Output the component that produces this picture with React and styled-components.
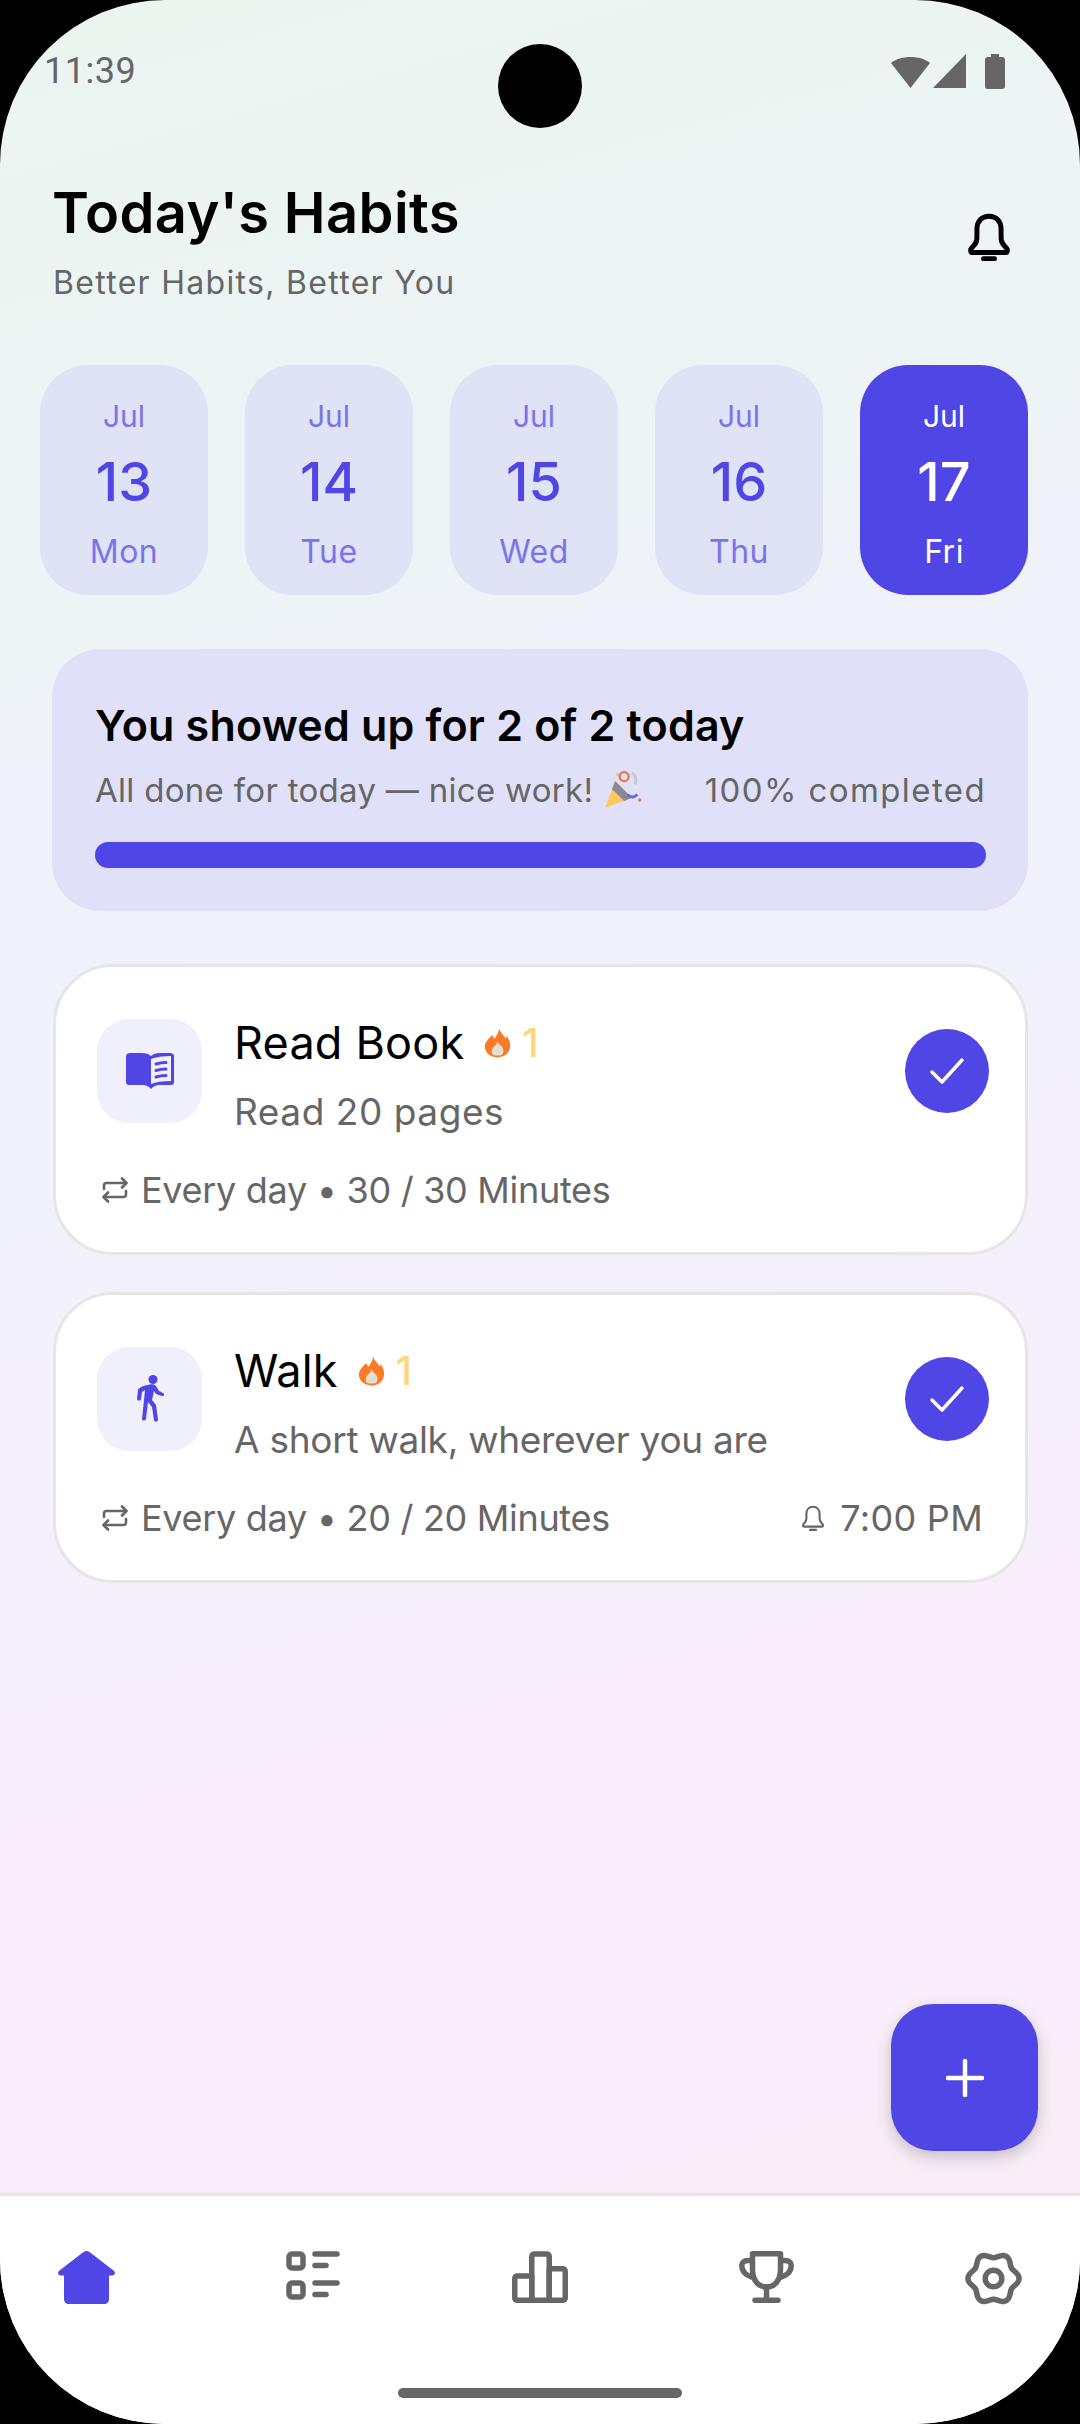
import styled, { createGlobalStyle } from 'styled-components';

const GlobalStyle = createGlobalStyle`
    html, body {
        margin: 0;
        padding: 0;
        background: #000;
    }
    * {
        box-sizing: border-box;
    }
`

const Screen = styled.div`
    position: relative;
    width: 1080px;
    height: 2424px;
    overflow: hidden;
    border-radius: 165px;
    display: flex;
    flex-direction: column;
    font-family: "Inter", "Noto Sans", sans-serif;
    background: linear-gradient(165deg, #ebf5ef 0%, #f0f2fb 38%, #f8eefa 72%, #f9edf6 100%);
`

const StatusBar = styled.div`
    height: 170px;
    padding: 49px 75px 0 44px;
    display: flex;
    justify-content: space-between;
    align-items: flex-start;
    flex-shrink: 0;

    .time {
        font-family: "Roboto", sans-serif;
        font-size: 36px;
        line-height: 44px;
        color: #666;
        letter-spacing: 0.5px;
    }

    svg {
        margin-top: 5px;
    }
`

const Camera = styled.div`
    position: absolute;
    left: 498px;
    top: 44px;
    width: 84px;
    height: 84px;
    border-radius: 50%;
    background: #000;
`

const Header = styled.div`
    padding: 7px 52px 0 52px;
    display: flex;
    justify-content: space-between;
    align-items: flex-start;
    height: 195px;
    flex-shrink: 0;

    .title {
        margin: 0;
        font-size: 56px;
        line-height: 72px;
        font-weight: 600;
        letter-spacing: 0.4px;
        color: #000;
    }

    .subtitle {
        margin: 14px 0 0 1px;
        font-size: 32px;
        line-height: 40px;
        letter-spacing: 1.3px;
        color: #666;
    }

    .bell {
        margin-top: 36px;
        margin-right: 17px;
    }
`

const DateRow = styled.div`
    display: flex;
    gap: 37px;
    padding: 0 52px 0 40px;
    flex-shrink: 0;
`

const DateChip = styled.div`
    width: 168px;
    height: 230px;
    border-radius: 48px;
    display: flex;
    flex-direction: column;
    align-items: center;
    padding-top: 31px;
    background: ${(p) => (p.$active ? '#4f46e5' : '#e0e2f6')};
    color: ${(p) => (p.$active ? '#fff' : '#7a74ea')};

    .month {
        font-size: 30px;
        line-height: 40px;
    }

    .day {
        font-size: 32px;
        line-height: 40px;
        letter-spacing: 0.5px;
    }

    .num {
        font-size: 54px;
        line-height: 70px;
        margin: 11px 0 15px 0;
        font-weight: 500;
        color: ${(p) => (p.$active ? '#fff' : '#4f46e5')};
    }
`

const Progress = styled.div`
    margin: 54px 52px 0 52px;
    height: 262px;
    border-radius: 48px;
    background: #e0e0f9;
    padding: 50px 42px 0 43px;
    flex-shrink: 0;

    .title {
        margin: 0;
        font-size: 43px;
        line-height: 52px;
        font-weight: 600;
        letter-spacing: 0.2px;
        color: #000;
    }

    .row {
        margin-top: 17px;
        display: flex;
        justify-content: space-between;
        align-items: center;
        font-size: 33px;
        line-height: 44px;
        color: #666;
    }

    .note {
        display: flex;
        align-items: center;
        gap: 10px;
        letter-spacing: 0.3px;
    }

    .percent {
        letter-spacing: 1.4px;
    }

    .bar {
        margin-top: 30px;
        height: 26px;
        border-radius: 13px;
        background: #4f46e5;
    }
`

const Card = styled.div`
    margin: ${(p) => p.$gap}px 52px 0 53px;
    height: 291px;
    background: #fff;
    border: 3px solid #e6e6e9;
    border-radius: 60px;
    padding: 52px 36px 0 41px;
    flex-shrink: 0;
`

const CardTop = styled.div`
    display: flex;
    align-items: flex-start;
`

const IconTile = styled.div`
    width: 105px;
    height: 104px;
    border-radius: 32px;
    background: #f0effc;
    display: flex;
    align-items: center;
    justify-content: center;
    flex-shrink: 0;
`

const CardText = styled.div`
    flex: 1;
    margin-left: 32px;

    .name {
        display: flex;
        align-items: center;
        margin: -5px 0 0 0;
        font-size: 45px;
        line-height: 58px;
        letter-spacing: 0.2px;
        color: #000;
    }

    .streak {
        margin-left: 20px;
        display: flex;
        align-items: center;
        gap: 11px;
        font-size: 39px;
        font-weight: 500;
        color: #fdd57e;
    }
`

const Desc = styled.p`
    margin: 17px 0 0 0;
    font-size: 37px;
    line-height: 46px;
    letter-spacing: ${(p) => p.$spacing}px;
    color: #666;
`

const CheckCircle = styled.div`
    width: 84px;
    height: 84px;
    border-radius: 50%;
    background: #4f46e5;
    display: flex;
    align-items: center;
    justify-content: center;
    margin-top: 10px;
    flex-shrink: 0;
`

const CardMeta = styled.div`
    margin: 32px 6px 0 5px;
    display: flex;
    justify-content: space-between;
    align-items: center;
    font-size: 36px;
    line-height: 46px;
    color: #666;
`

const MetaPart = styled.span`
    display: flex;
    align-items: center;
    gap: ${(p) => p.$gap}px;
    letter-spacing: ${(p) => p.$spacing}px;
`

const Fab = styled.div`
    position: absolute;
    left: 891px;
    top: 2004px;
    width: 147px;
    height: 147px;
    border-radius: 42px;
    background: #4f46e5;
    display: flex;
    align-items: center;
    justify-content: center;
    box-shadow: 0 6px 16px rgba(0, 0, 0, 0.2);
`

const BottomNav = styled.div`
    margin-top: auto;
    height: 231px;
    background: #fff;
    border-top: 3px solid #e6e6e9;
    padding: 55px 58px 0 58px;
    display: flex;
    justify-content: space-between;
    align-items: flex-start;
    position: relative;
    flex-shrink: 0;

    svg {
        display: block;
    }
`

const HomeBar = styled.div`
    position: absolute;
    left: 398px;
    bottom: 26px;
    width: 284px;
    height: 10px;
    border-radius: 5px;
    background: #666;
`

const Fire = () => (
    <svg width="27" height="32" viewBox="0 0 30 34">
        <path d="M17 1c1 5 4 6 7 11 1-1 1-2 1-3 3 4 4 8 4 11 0 8-6 13-14 13S1 28 1 21c0-6 5-9 8-13 1 2 2 3 3 4 2-3 4-6 5-11z" fill="#fb7a25" />
        <path d="M15 15c1 3 3 4 5 6 2 3 2 6 1 8-1 2-3 2-6 2s-5 0-6-2c-1-3 0-6 2-8 2-1 3-3 4-6z" fill="#e5dfd2" />
    </svg>
)

const Popper = () => (
    <svg width="40" height="40" viewBox="0 0 36 36">
        <path d="M2 34l9-24 15 15z" fill="#fdc95e" />
        <path d="M11 10l15 15-7 3-11-11z" fill="#8a8a94" />
        <circle cx="19" cy="6" r="4" fill="none" stroke="#e8734a" strokeWidth="2" />
        <path d="M26 3c4 2 4 6 3 10" fill="none" stroke="#c9c9cf" strokeWidth="3" />
        <path d="M22 22c3 3 6 3 9 0" fill="none" stroke="#6d66e8" strokeWidth="2.5" />
        <circle cx="33" cy="27" r="1.5" fill="#e8734a" />
        <circle cx="13" cy="4" r="1.5" fill="#fdc95e" />
    </svg>
)

const Repeat = () => (
    <svg width="26" height="28" viewBox="0 0 26 28" fill="none" stroke="#666" strokeWidth="2.6" strokeLinecap="round" strokeLinejoin="round">
        <path d="M2 13V9.5C2 8 3 7 4.5 7H24" />
        <path d="M20 2.5L24.5 7 20 11.5" />
        <path d="M24 15v3.5c0 1.500-1 2.500-2.500 2.500H2" />
        <path d="M6 16.500L1.500 21 6 25.500" />
    </svg>
)

const Bell = ({ size, color, weight }) => (
    <svg width={size} height={size * 1.1} viewBox="0 0 40 44" fill="none" stroke={color} strokeWidth={weight} strokeLinejoin="round">
        <path d="M20 3c-7 0-11 5-11 12v8c0 4-2 6-5 9-1 1-1 4 1 4h30c2 0 2-3 1-4-3-3-5-5-5-9v-8c0-7-4-12-11-12z" />
        <path d="M15 41.500h10" strokeLinecap="round" />
    </svg>
)

const Check = () => (
    <svg width="36" height="30" viewBox="0 0 36 30" fill="none" stroke="#fff" strokeWidth="3.500" strokeLinecap="round" strokeLinejoin="round">
        <path d="M3 16l10 10L33 4" />
    </svg>
)

const BookIcon = () => (
    <svg width="48" height="38" viewBox="0 0 48 38">
        <path d="M4 1h12c4 0 7 1 9 3 2-2 5-3 9-3h10c2 0 4 1 4 3v26c0 2-1 3-3 3H33c-3 0-5 1-8 4-3-3-5-4-8-4H3c-2 0-3-1-3-3V4c0-2 2-3 4-3z" fill="#4f46e5" />
        <path d="M25 7c5-2 12-3 20-3v25c-8 0-15 1-20 3z" fill="#f0effc" />
        <path d="M30 12c3-1 7-1.500 10-1.500M30 18.500c3-1 7-1.500 10-1.500M30 25c3-1 7-1.500 10-1.500" stroke="#4f46e5" strokeWidth="3" strokeLinecap="round" fill="none" />
    </svg>
)

const WalkIcon = () => (
    <svg width="30" height="48" viewBox="0 0 30 48" fill="#4f46e5">
        <circle cx="18" cy="4.500" r="4.500" />
        <path d="M13 10c3-1 6-1 8 1l3 5 4 2c2 1 1 4-1 3l-6-2-2-3-2 9 4 5 2 15c0 2-4 2-4 0l-2-13-4-5-2 17c-1 2-4 2-4 0l2-19 1-10-3 2-1 7c0 2-4 2-4 0l1-9c0-2 7-5 10-5z" />
    </svg>
)

const HomeIcon = () => (
    <svg width="57" height="53" viewBox="0 0 57 53" fill="#4f46e5">
        <path d="M25.500 1c2-1.300 4-1.300 6 0l24 18.500c2.500 2 1.500 5-1.500 5h-3v23.500c0 3-2 5-5 5H11c-3 0-5-2-5-5V24.500H3c-3 0-4-3-1.500-5z" />
    </svg>
)

const ListIcon = () => (
    <svg width="54" height="49" viewBox="0 0 54 49" fill="none" stroke="#666" strokeWidth="5.500" strokeLinecap="round" strokeLinejoin="round">
        <rect x="3" y="3" width="14" height="14" rx="3" />
        <rect x="3" y="32" width="14" height="14" rx="3" />
        <path d="M29 3h22M29 14.500h11M29 32h22M29 43.500h11" />
    </svg>
)

const ChartIcon = () => (
    <svg width="56" height="52" viewBox="0 0 56 52" fill="none" stroke="#666" strokeWidth="5.500" strokeLinejoin="round">
        <path d="M2.750 28c0-2 1-3 3-3h14v24.250h-14c-2 0-3-1-3-3z" />
        <path d="M19.750 6c0-2 1-3 3-3h11.500c2 0 3 1 3 3v43.250H19.750z" />
        <path d="M37.250 17.750h13c2 0 3 1 3 3v25.500c0 2-1 3-3 3h-13z" />
    </svg>
)

const TrophyIcon = () => (
    <svg width="55" height="52" viewBox="0 0 55 52" fill="none" stroke="#666" strokeWidth="5.500" strokeLinecap="round" strokeLinejoin="round">
        <path d="M13.500 2.750h28V18c0 12-6 18-14 18s-14-6-14-18z" />
        <path d="M12.500 9.500H9c-4 0-6.250 2-6.250 5 0 5 3.500 9.500 10 11.500M42.500 9.500H46c4 0 6.250 2 6.250 5 0 5-3.500 9.500-10 11.500" />
        <path d="M27.500 36v13M16 49.250h23" />
    </svg>
)

// wavy outline of the cog, six soft lobes around the centre
const gearOutline = Array.from({ length: 72 }, (_, i) => {
    const angle = (i * 5 * Math.PI) / 180;
    const radius = 23.2 + 2.4 * Math.cos(6 * angle);
    const x = 28.5 + radius * Math.cos(angle);
    const y = 27.5 + radius * Math.sin(angle);
    return `${x.toFixed(2)},${y.toFixed(2)}`;
}).join(' ');

const GearIcon = () => (
    <svg width="57" height="55" viewBox="0 0 57 55" fill="none" stroke="#666" strokeWidth="5.500" strokeLinejoin="round">
        <polygon points={gearOutline} />
        <circle cx="28.500" cy="27.500" r="8.300" />
    </svg>
)

const dates = [
    { num: 13, day: 'Mon' },
    { num: 14, day: 'Tue' },
    { num: 15, day: 'Wed' },
    { num: 16, day: 'Thu' },
    { num: 17, day: 'Fri', active: true },
]

const HabitCard = ({ gap, icon, name, desc, descSpacing, meta, reminder }) => (
    <Card $gap={gap}>
        <CardTop>
            <IconTile>{icon}</IconTile>
            <CardText>
                <p className="name">
                    {name}
                    <span className="streak"><Fire />1</span>
                </p>
                <Desc $spacing={descSpacing}>{desc}</Desc>
            </CardText>
            <CheckCircle><Check /></CheckCircle>
        </CardTop>
        <CardMeta>
            <MetaPart $gap={13} $spacing={-0.3}><Repeat />{meta}</MetaPart>
            {reminder && <MetaPart $gap={15} $spacing={0.3}><Bell size={24} color="#666" weight={3.500} />{reminder}</MetaPart>}
        </CardMeta>
    </Card>
)

const App = () => {
    return (
        <>
            <GlobalStyle />
            <Screen>
                <StatusBar>
                    <span className="time">11:39</span>
                    <svg width="114" height="35" viewBox="0 0 114 35" fill="#666">
                        <path d="M0 9C9 1 30 1 39 9L19.500 34z" />
                        <path d="M42 34L75 0v34z" />
                        <path d="M94 6c0-2 1-3 3-3h3V0h8v3h3c2 0 3 1 3 3v26c0 2-1 3-3 3H97c-2 0-3-1-3-3z" />
                    </svg>
                </StatusBar>
                <Camera />
                <Header>
                    <div>
                        <h1 className="title">Today's Habits</h1>
                        <p className="subtitle">Better Habits, Better You</p>
                    </div>
                    <div className="bell">
                        <Bell size={44} color="#000" weight={4.500} />
                    </div>
                </Header>
                <DateRow>
                    {dates.map((d) => (
                        <DateChip key={d.num} $active={d.active}>
                            <span className="month">Jul</span>
                            <span className="num">{d.num}</span>
                            <span className="day">{d.day}</span>
                        </DateChip>
                    ))}
                </DateRow>
                <Progress>
                    <p className="title">You showed up for 2 of 2 today</p>
                    <div className="row">
                        <span className="note">All done for today — nice work! <Popper /></span>
                        <span className="percent">100% completed</span>
                    </div>
                    <div className="bar" />
                </Progress>
                <HabitCard
                    gap={53}
                    icon={<BookIcon />}
                    name="Read Book"
                    desc="Read 20 pages"
                    descSpacing={0.55}
                    meta="Every day • 30 / 30 Minutes"
                />
                <HabitCard
                    gap={37}
                    icon={<WalkIcon />}
                    name="Walk"
                    desc="A short walk, wherever you are"
                    descSpacing={-0.27}
                    meta="Every day • 20 / 20 Minutes"
                    reminder="7:00 PM"
                />
                <Fab>
                    <svg width="38" height="38" viewBox="0 0 38 38" stroke="#fff" strokeWidth="4.500" strokeLinecap="round">
                        <path d="M19 2v34M2 19h34" />
                    </svg>
                </Fab>
                <BottomNav>
                    <HomeIcon />
                    <ListIcon />
                    <ChartIcon />
                    <TrophyIcon />
                    <GearIcon />
                    <HomeBar />
                </BottomNav>
            </Screen>
        </>
    )
}

export default App
